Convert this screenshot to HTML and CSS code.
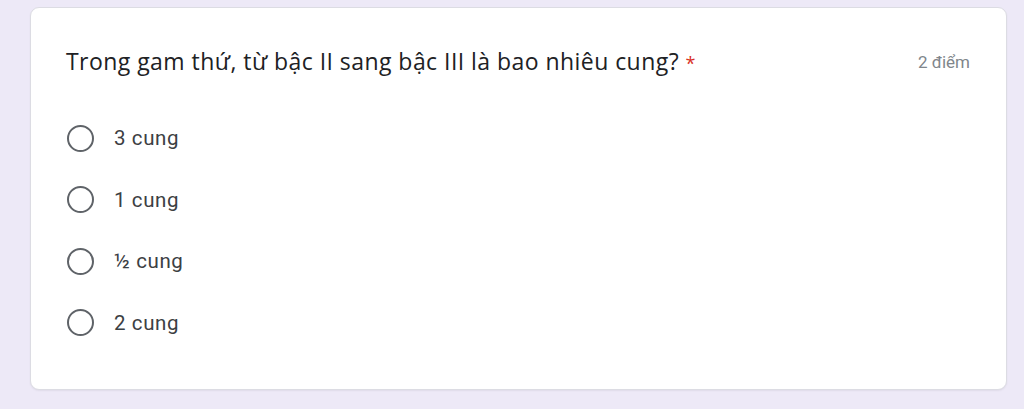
FILE: index.html
```html
<!DOCTYPE html>
<html lang="vi">
<head>
<meta charset="utf-8">
<link rel="stylesheet" href="styles.css">
</head>
<body>
<div class="card">
  <div class="header">
    <div class="question">Trong gam thứ, từ bậc II sang bậc III là bao nhiêu cung? <span class="req">*</span></div>
    <div class="points">2 điểm</div>
  </div>
  <div class="options">
    <label class="option"><span class="radio"></span><span class="label">3 cung</span></label>
    <label class="option"><span class="radio"></span><span class="label">1 cung</span></label>
    <label class="option"><span class="radio"></span><span class="label">½ cung</span></label>
    <label class="option"><span class="radio"></span><span class="label">2 cung</span></label>
  </div>
</div>
</body>
</html>
```

FILE: styles.css
```css
html, body {
  margin: 0;
  padding: 0;
  background: #ede9f7;
}
body {
  padding: 7px 17px 0 30px;
  height: 409px;
  box-sizing: border-box;
}
.card {
  background: #fff;
  border: 1px solid #dcdce3;
  border-radius: 9px;
  height: 383px;
  box-sizing: border-box;
  padding: 36px 36px 0 35px;
  box-shadow: 0 1px 2px rgba(0,0,0,0.06);
}
.header {
  display: flex;
  justify-content: space-between;
  align-items: flex-start;
}
.question {
  font-family: "Open Sans", "Noto Sans", sans-serif;
  font-size: 23px;
  line-height: 38px;
  color: #202124;
  letter-spacing: 0.45px;
  margin-top: -2px;
}
.req {
  color: #d93025;
  font-size: 18px;
}
.points {
  font-family: Roboto, "Liberation Sans", sans-serif;
  font-size: 17px;
  color: #80868b;
  line-height: 36px;
}
.options {
  display: flex;
  flex-direction: column;
  gap: 33.5px;
  margin-top: 42px;
}
.option {
  display: flex;
  align-items: center;
  height: 28px;
}
.radio {
  width: 23px;
  height: 23px;
  margin-left: 1px;
  border: 2.5px solid #5f6368;
  border-radius: 50%;
  box-sizing: content-box;
  flex: none;
}
.label {
  margin-left: 20px;
  font-family: Roboto, "Liberation Sans", sans-serif;
  font-size: 20.5px;
  letter-spacing: 0.6px;
  color: #3c4043;
}
```
